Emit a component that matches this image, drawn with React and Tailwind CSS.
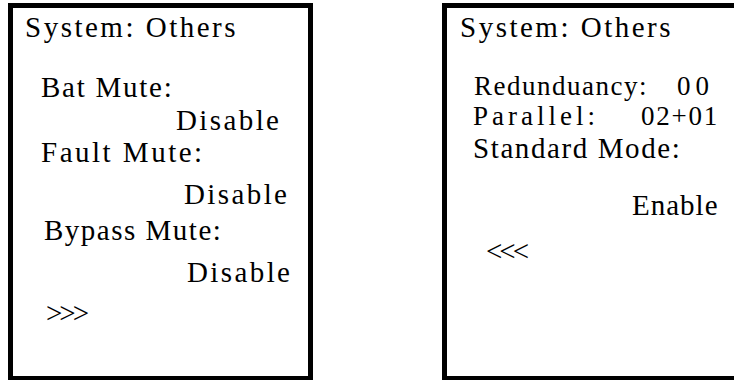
const Panel = ({ children, className }) => {
	return (
		<div className={`shrink-0 h-[378px] border-[5px] border-black bg-white text-black text-[29px] leading-[24px] ${className}`}>
			{children}
		</div>
	);
};

const App = () => {
	return (
		<div className="w-[734px] h-[380px] overflow-hidden bg-white flex pl-[8px] pt-[3px] font-['Liberation_Serif','Tinos','DejaVu_Serif',serif]">
			<Panel className="w-[305px]">
				<div className="mt-[7px] pl-[12px] tracking-[2.5px] whitespace-nowrap">System: Others</div>
				<div className="mt-[36px] pl-[28px] tracking-[1.75px] whitespace-nowrap">Bat Mute:</div>
				<div className="mt-[9px] pl-[163px] tracking-[2.4px]">Disable</div>
				<div className="mt-[8px] pl-[28px] tracking-[2.5px] whitespace-nowrap">Fault Mute:</div>
				<div className="mt-[18px] pl-[171px] tracking-[2.4px]">Disable</div>
				<div className="mt-[12px] pl-[31px] tracking-[1.5px] whitespace-nowrap">Bypass Mute:</div>
				<div className="mt-[18px] pl-[174px] tracking-[2.4px]">Disable</div>
				<div className="mt-[17px] pl-[33px] tracking-[-3px]">&gt;&gt;&gt;</div>
			</Panel>

			<Panel className="w-[300px] ml-[129px]">
				<div className="mt-[7px] pl-[13px] tracking-[2.5px] whitespace-nowrap">System: Others</div>
				<div className="mt-[35px] pl-[27px] flex whitespace-nowrap text-[27px]">
					<span className="w-[203px] shrink-0 tracking-[1.5px]">Redunduancy:</span>
					<span className="tracking-[5px]">00</span>
				</div>
				<div className="mt-[6px] pl-[26px] flex whitespace-nowrap text-[27px]">
					<span className="w-[168px] shrink-0 tracking-[4px]">Parallel:</span>
					<span className="tracking-[1.75px]">02+01</span>
				</div>
				<div className="mt-[8px] pl-[26px] tracking-[1.6px] whitespace-nowrap">Standard Mode:</div>
				<div className="mt-[33px] pl-[185px] tracking-[1px]">Enable</div>
				<div className="mt-[22px] pl-[39px] tracking-[-3px]">&lt;&lt;&lt;</div>
			</Panel>
		</div>
	);
};

export default App;
